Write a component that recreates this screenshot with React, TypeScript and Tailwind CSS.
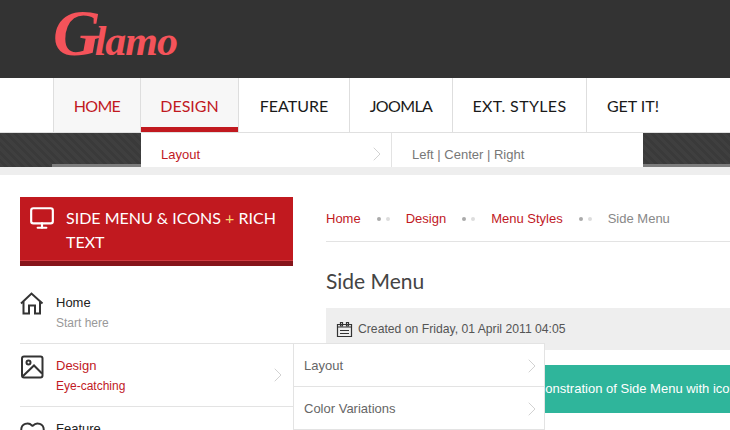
import { ChevronRight, Heart, Monitor } from 'lucide-react';

const NAV_ITEMS = [
  { label: 'HOME', width: 'w-[88px]', className: 'bg-[#f7f7f7] text-[#c1191f] tracking-[-0.7px]' },
  { label: 'DESIGN', width: 'w-[98px]', className: 'bg-[#f7f7f7] text-[#c1191f]', active: true },
  { label: 'FEATURE', width: 'w-[111px]', className: 'text-[#1a1a1a]' },
  { label: 'JOOMLA', width: 'w-[103px]', className: 'text-[#1a1a1a] tracking-[-0.6px]' },
  { label: 'EXT. STYLES', width: 'w-[134px]', className: 'text-[#1a1a1a] tracking-[0.35px]' },
  { label: 'GET IT!', width: 'w-[92px] border-r-0', className: 'text-[#1a1a1a]' },
];

const CRUMBS = ['Home', 'Design', 'Menu Styles'];

function HomeIcon() {
  return (
    <svg className="h-[23px] w-[24px]" viewBox="0 0 24 23" fill="none" stroke="currentColor" strokeWidth="2" aria-hidden="true">
      <path d="M1 11.5 11.5 1.5 22.5 11.5" />
      <path d="M3.5 9.5V21.5H9V13.5H15V21.5H20V9.5" />
    </svg>
  );
}

function PictureIcon() {
  return (
    <svg className="h-[24px] w-[24px]" viewBox="0 0 24 24" fill="none" stroke="currentColor" strokeWidth="2" aria-hidden="true">
      <rect x="2" y="1.5" width="20.5" height="21" rx="2" />
      <circle cx="8.5" cy="7.5" r="2" />
      <path d="M2.5 21.5 14 10.5 22 18.5" />
    </svg>
  );
}

function DateIcon() {
  return (
    <svg className="h-[17px] w-[17px]" viewBox="0 0 17 17" fill="none" stroke="currentColor" strokeWidth="1.2" aria-hidden="true">
      <path d="M1.5 3.5H15.5V15.5H1.5Z" />
      <path d="M4.5 1.5H6.5V5H4.5ZM10.5 1.5H12.5V5H10.5Z" />
      <path d="M1.5 6H15.5M4 9.5H13M4 12.5H13" />
    </svg>
  );
}

function MenuChevron({ className }: { className: string }) {
  return <ChevronRight className={`absolute h-[24px] w-[24px] text-[#d2d2d2] ${className}`} strokeWidth={1} />;
}

function Dots() {
  return (
    <span className="mx-[16px] flex gap-[5px]">
      <span className="h-[4px] w-[4px] rounded-full bg-[#aaa]" />
      <span className="h-[4px] w-[4px] rounded-full bg-[#ddd]" />
    </span>
  );
}

function SideItem({
  icon,
  title,
  sub,
  active,
  chevron,
}: {
  icon: React.ReactNode;
  title: string;
  sub?: string;
  active?: boolean;
  chevron?: boolean;
}) {
  return (
    <div className="relative flex h-[63px] border-b border-[#e3e3e3] pt-[11px]">
      <div className="w-[36px] text-[#333]">{icon}</div>
      <div className="pt-[1px]">
        <div className={`text-[13px] leading-[20px] ${active ? 'text-[#c1191f]' : 'text-[#222]'}`}>{title}</div>
        {sub && <div className={`text-[12px] leading-[20px] ${active ? 'text-[#c1191f]' : 'text-[#999]'}`}>{sub}</div>}
      </div>
      {chevron && <MenuChevron className="right-[3px] top-[19px]" />}
    </div>
  );
}

export default function App() {
  return (
    <div className="relative h-[430px] w-[730px] overflow-hidden bg-white font-['Liberation_Sans',sans-serif] text-[12px]">
      {/* Header */}
      <header className="h-[78px] bg-[#333333] pl-[53px] pt-[2px] font-['Liberation_Serif',serif] font-bold italic text-[#f5535a]">
        <span className="text-[66px] leading-[62px] tracking-[-6px]">G</span>
        <span className="text-[42px] leading-[62px] tracking-[-1px]">lamo</span>
      </header>

      {/* Main nav */}
      <nav className="flex h-[55px] border-b border-[#e0e0e0] pl-[53px] font-['Lato',sans-serif] text-[16px]">
        {NAV_ITEMS.map((item, i) => (
          <div
            key={item.label}
            className={`relative flex items-center justify-center border-r border-[#dedede] pt-[2px] ${i === 0 ? 'border-l' : ''} ${item.width} ${item.className}`}
          >
            {item.label}
            {item.active && <span className="absolute inset-x-0 bottom-0 h-[5px] bg-[#c1191f]" />}
          </div>
        ))}
      </nav>

      {/* Dropdown band */}
      <div className="relative flex h-[34px] bg-[#3d3d3d] bg-[repeating-linear-gradient(45deg,#3f3f3f_0px,#3f3f3f_3px,#3a3a3a_3px,#3a3a3a_6px)] pl-[141px]">
        <span className="absolute bottom-0 left-[52px] h-[3px] w-[89px] bg-[#7c7c7c]" />
        <span className="absolute bottom-0 left-[643px] right-0 h-[3px] bg-[#7c7c7c]" />
        <div className="relative flex h-full w-[502px] bg-white text-[13px]">
          <div className="relative w-[251px] border-r border-[#e3e3e3] pl-[20px] pt-[14px] leading-[16px] text-[#c1191f]">
            Layout
            <MenuChevron className="right-[2px] top-[9px]" />
          </div>
          <div className="pl-[20px] pt-[14px] leading-[16px] text-[#777]">Left | Center | Right</div>
        </div>
      </div>
      <div className="h-[8px] bg-[#eeeeee]" />

      {/* Body */}
      <div className="flex pl-[20px] pt-[22px]">
        <aside className="w-[273px] shrink-0">
          <div className="flex h-[69px] border-b-[5px] border-[#86141a] bg-[#c1191f] pl-[9px] pt-[9px] font-['Lato',sans-serif] text-[16px] leading-[24px] text-white shadow-[inset_0_-1px_0_#d03a40]">
            <Monitor className="mr-[11px] mt-[-1px] h-[26px] w-[26px] shrink-0" strokeWidth={2} />
            <div>
              SIDE MENU &amp; ICONS <span className="text-[#f5d76e]">+</span> RICH TEXT
            </div>
          </div>
          <div className="mt-[15px]">
            <SideItem icon={<HomeIcon />} title="Home" sub="Start here" />
            <SideItem icon={<PictureIcon />} title="Design" sub="Eye-catching" active chevron />
            <SideItem icon={<Heart className="ml-[-1px] mt-[1px] h-[27px] w-[27px]" strokeWidth={1.75} />} title="Feature" />
          </div>
        </aside>

        <main className="ml-[33px] flex-1">
          <div className="flex h-[45px] items-center border-b border-[#e3e3e3] text-[13px]">
            {CRUMBS.map((c) => (
              <span key={c} className="flex items-center text-[#c1191f]">
                {c}
                <Dots />
              </span>
            ))}
            <span className="text-[#888]">Side Menu</span>
          </div>
          <h1 className="mt-[24px] font-['Lato',sans-serif] text-[21px] leading-[30px] text-[#444]">Side Menu</h1>
          <div className="mt-[12px] flex h-[42px] items-center bg-[#eeeeee] pl-[10px] text-[12.2px] text-[#555]">
            <span className="mr-[5px] text-[#333]">
              <DateIcon />
            </span>
            Created on Friday, 01 April 2011 04:05
          </div>
          <div className="mt-[15px] flex h-[48px] items-center overflow-hidden whitespace-nowrap bg-[#2fb59b] pl-[142px] text-[13px] text-white">
            This is a demonstration of Side Menu with icons
          </div>
        </main>
      </div>

      {/* Flyout */}
      <div className="absolute left-[293px] top-[343px] w-[252px] border-x border-t border-[#e3e3e3] bg-white text-[13px] text-[#666]">
        <div className="relative flex h-[43px] items-center border-b border-[#e3e3e3] pl-[10px] pt-[2px]">
          Layout
          <MenuChevron className="right-0 top-[10px]" />
        </div>
        <div className="relative flex h-[43px] items-center border-b border-[#e3e3e3] pl-[10px] pt-[2px]">
          Color Variations
          <MenuChevron className="right-0 top-[10px]" />
        </div>
      </div>
    </div>
  );
}
